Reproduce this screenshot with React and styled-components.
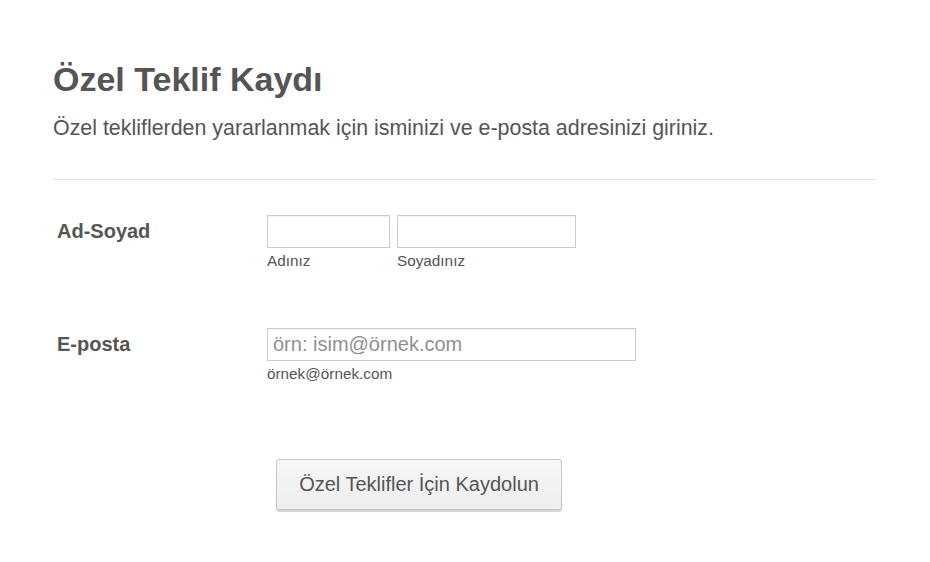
import React from 'react';
import styled, { createGlobalStyle } from 'styled-components';

const GlobalStyle = createGlobalStyle`
    body {
        margin: 0;
        background: #fff;
        font-family: "Liberation Sans", Arial, sans-serif;
        color: #555;
    }
`;

const Page = styled.div`
    padding: 61px 54px 40px 53px;
`;

const Title = styled.h1`
    margin: 0;
    font-size: 34px;
    line-height: 36px;
    font-weight: bold;
    color: #555;
`;

const Subtitle = styled.p`
    margin: 19px 0 0;
    font-size: 21.4px;
    line-height: 24px;
    color: #555;
`;

const Divider = styled.hr`
    margin: 39px 0 0;
    border: 0;
    border-top: 1px solid #e3e3e3;
`;

const Row = styled.div`
    display: grid;
    grid-template-columns: 214px 1fr;
    margin-top: ${(p) => p.top}px;
`;

const Label = styled.label`
    padding-left: 4px;
    font-size: 20px;
    line-height: 32px;
    font-weight: bold;
    color: #555;
`;

const Fields = styled.div`
    display: flex;
    gap: 7px;
`;

const Field = styled.div`
    display: flex;
    flex-direction: column;
`;

const Input = styled.input`
    box-sizing: border-box;
    width: ${(p) => p.w}px;
    height: 33px;
    margin: 0;
    padding: 0 5px;
    border: 1px solid #cbcbcb;
    box-shadow: inset 0 1px 1px rgba(0, 0, 0, 0.05);
    font-family: "Liberation Sans", Arial, sans-serif;
    font-size: 20px;
    color: #555;
    outline: none;

    &::placeholder {
        color: #8f8f8f;
    }
`;

const Sub = styled.span`
    margin-top: 4px;
    font-size: 15.3px;
    line-height: 18px;
    color: #555;
`;

const ButtonRow = styled.div`
    margin-top: 76px;
    padding-left: 223px;
`;

const Button = styled.button`
    box-sizing: border-box;
    width: 286px;
    height: 51px;
    padding: 0;
    border: 1px solid #c8c8c8;
    border-radius: 3px;
    background: linear-gradient(#f6f6f6, #eeeeee);
    box-shadow: 0 2px 1px rgba(0, 0, 0, 0.18);
    font-family: "Liberation Sans", Arial, sans-serif;
    font-size: 20px;
    color: #555;
`;

export default () => (
    <>
        <GlobalStyle />
        <Page>
            <Title>Özel Teklif Kaydı</Title>
            <Subtitle>Özel tekliflerden yararlanmak için isminizi ve e-posta adresinizi giriniz.</Subtitle>
            <Divider />

            <Row top={35}>
                <Label>Ad-Soyad</Label>
                <Fields>
                    <Field>
                        <Input w={123} />
                        <Sub>Adınız</Sub>
                    </Field>
                    <Field>
                        <Input w={179} />
                        <Sub>Soyadınız</Sub>
                    </Field>
                </Fields>
            </Row>

            <Row top={58}>
                <Label>E-posta</Label>
                <Field>
                    <Input w={369} placeholder="örn: isim@örnek.com" />
                    <Sub>örnek@örnek.com</Sub>
                </Field>
            </Row>

            <ButtonRow>
                <Button>Özel Teklifler İçin Kaydolun</Button>
            </ButtonRow>
        </Page>
    </>
);
